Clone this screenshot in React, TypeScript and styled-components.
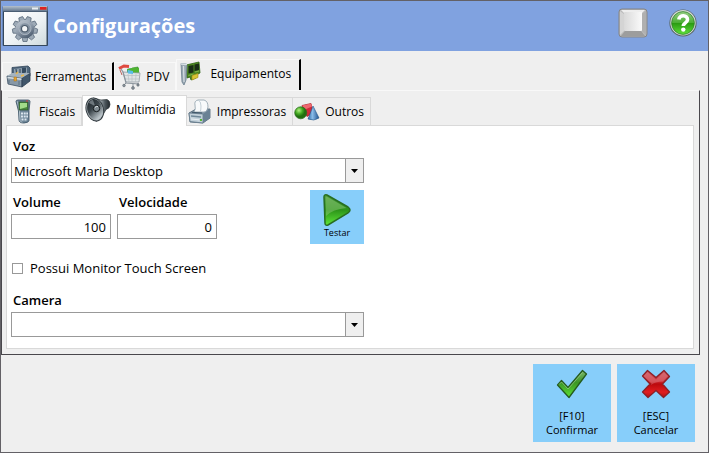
import React from "react";
import styled, { createGlobalStyle } from "styled-components";

const GlobalStyle = createGlobalStyle`
  *, *::before, *::after { box-sizing: border-box; }
  html, body, #root { height: 100%; }
  body {
    margin: 0;
    background: #efefef;
    color: #000;
    font-family: "Open Sans", "Noto Sans", sans-serif;
    font-size: 13px;
  }
  button, input, select { font: inherit; color: inherit; margin: 0; }
`;

const Window = styled.div`
  min-height: 100%;
  display: flex;
  flex-direction: column;
  border: 1px solid #636166;
  background: #efefef;
`;

const Header = styled.header`
  display: flex;
  align-items: center;
  height: 50px;
  padding: 0 11px 0 1px;
  background: #80a2e0;
`;

const Title = styled.h1`
  flex: 1;
  margin: 0 0 0 4px;
  color: #fff;
  font-size: 20px;
  line-height: 24px;
  font-weight: 700;
`;

const HeaderActions = styled.div`
  display: flex;
  align-items: center;
  gap: 21px;
  padding-bottom: 6px;
`;

const IconButton = styled.button`
  display: flex;
  padding: 0;
  border: 0;
  background: none;
`;

const Main = styled.main`
  padding: 8px 8px 0 0;
`;

const OuterTabs = styled.div`
  display: flex;
  align-items: flex-end;
  height: 31px;
  padding-left: 1px;
`;

const OuterTab = styled.button<{ $active?: boolean; $divider?: boolean }>`
  display: flex;
  align-items: center;
  gap: ${(p) => (p.$active ? 8 : 4)}px;
  height: ${(p) => (p.$active ? 31 : 28)}px;
  padding: ${(p) => (p.$active ? "0 8px 3px 3px" : "0 6px 0 3px")};
  border: 0 solid #f8f8f8;
  border-top-width: 1px;
  border-left-width: 1px;
  border-right: ${(p) => (p.$active || p.$divider ? "2px solid #000" : "1px solid #f8f8f8")};
  background: #efefef;
  font-size: 12px;
  white-space: nowrap;
`;

const OuterPage = styled.div`
  padding: 4px 5px 5px 4px;
  border: 1px solid #49474c;
  border-top-color: #f8f8f8;
`;

const InnerTabs = styled.div`
  display: flex;
  align-items: flex-end;
  height: 30px;
  padding-left: 2px;
`;

const InnerTab = styled.button<{ $active?: boolean }>`
  display: flex;
  align-items: center;
  gap: 5px;
  height: ${(p) => (p.$active ? 31 : 28)}px;
  margin-bottom: ${(p) => (p.$active ? -1 : 0)}px;
  padding: ${(p) => (p.$active ? "0 10px 3px 2px" : "0 6px 0 1px")};
  border: 1px solid #d9d9d9;
  border-bottom: 0;
  border-left-width: ${(p) => (p.$active ? 1 : 0)}px;
  background: ${(p) => (p.$active ? "#fff" : "#efefef")};
  font-size: 12px;
  white-space: nowrap;
  z-index: ${(p) => (p.$active ? 1 : 0)};
`;

const Panel = styled.section`
  padding: 11px 4px 11px;
  border: 1px solid #d9d9d9;
  background: #fff;
`;

const Form = styled.form`
  display: flex;
  flex-direction: column;
  max-width: 353px;
`;

const Field = styled.div`
  display: flex;
  flex-direction: column;
  gap: 3px;
`;

const Label = styled.label`
  padding-left: 2px;
  font-weight: 600;
  line-height: 18px;
`;

const Combo = styled.div`
  display: grid;
  grid-template-columns: 1fr 18px;
  height: 25px;
  border: 1px solid #999;
  background: #fff;
`;

const Select = styled.select`
  grid-area: 1 / 1 / 2 / 3;
  appearance: none;
  width: 100%;
  padding: 0 20px 0 2px;
  border: 0;
  border-radius: 0;
  background: transparent;
`;

const ComboArrow = styled.span`
  grid-area: 1 / 2 / 2 / 3;
  display: flex;
  align-items: center;
  justify-content: center;
  border: 1px solid #999;
  border-width: 0 0 0 1px;
  background: #efefef;
  pointer-events: none;
`;

const AudioRow = styled.div`
  display: flex;
  align-items: flex-start;
  gap: 6px;
  margin-top: 7px;
  & > ${Field} { padding-top: 3px; }
  & > :last-child { margin-left: auto; }
`;

const NumberInput = styled.input`
  width: 100px;
  height: 25px;
  padding: 0 4px;
  border: 1px solid #999;
  border-radius: 0;
  background: #fff;
  text-align: right;
`;

const TestButton = styled.button`
  display: flex;
  flex-direction: column;
  align-items: center;
  width: 54px;
  height: 54px;
  padding: 3px 0 0;
  border: 0;
  background: #87cefa;
  font-size: 9px;
  line-height: 12px;
`;

const CheckRow = styled.label`
  display: flex;
  align-items: center;
  align-self: flex-start;
  gap: 7px;
  margin: 15px 0 14px 1px;
  line-height: 18px;
`;

const Checkbox = styled.input`
  appearance: none;
  width: 11px;
  height: 11px;
  border: 1px solid #999;
  background: #fff;
  &:checked { background: #444; box-shadow: inset 0 0 0 2px #fff; }
`;

const Footer = styled.footer`
  display: flex;
  justify-content: flex-end;
  gap: 6px;
  padding: 9px 13px 0 0;
`;

const ActionButton = styled.button`
  display: flex;
  flex-direction: column;
  align-items: center;
  gap: 10px;
  width: 78px;
  height: 78px;
  padding: 5px 0 0;
  border: 0;
  background: #87cefa;
  font-size: 11px;
  line-height: 14px;
`;

const GEAR_TEETH = [0, 40, 80, 120, 160, 200, 240, 280, 320];

const SettingsIcon = () => (
  <svg width="47" height="42" viewBox="0 0 47 42" aria-hidden="true">
    <defs>
      <linearGradient id="winBar" x2="0" y2="1">
        <stop stopColor="#b4c0cc" /><stop offset="1" stopColor="#60748a" />
      </linearGradient>
      <linearGradient id="winBody" x2="1" y2="1">
        <stop stopColor="#fff" /><stop offset=".55" stopColor="#edf2f4" /><stop offset="1" stopColor="#cfdadd" />
      </linearGradient>
      <linearGradient id="gear" gradientUnits="userSpaceOnUse" x1="15" y1="11" x2="29" y2="37">
        <stop stopColor="#d3dae1" /><stop offset=".5" stopColor="#8f9cab" /><stop offset="1" stopColor="#2c3e52" />
      </linearGradient>
    </defs>
    <rect x=".7" y="1" width="45.3" height="40" rx="1" fill="#34475c" />
    <rect x="1" y="1" width="44.5" height="5.500" fill="url(#winBar)" />
    <rect x="2" y="7" width="42.500" height="33" fill="url(#winBody)" />
    <path d="M30 3.500h6" stroke="#e8eef3" strokeWidth="2" />
    <rect x="38" y="2" width="6.500" height="2.700" fill="#df2222" />
    <g stroke="#5d6d7e" strokeWidth=".8" strokeLinejoin="round">
      {GEAR_TEETH.map((a) => (
        <path key={a} d="M20 16l1-4.500h4l1 4.500z" fill="#9daab6" transform={`rotate(${a + 20} 23 24)`} />
      ))}
    </g>
    <circle cx="23" cy="24" r="9.300" fill="url(#gear)" />
    <circle cx="23" cy="23.700" r="6" fill="#8694a3" stroke="#b3bdc6" strokeWidth=".8" />
    <circle cx="22.700" cy="23.700" r="3.200" fill="#f3f5f6" stroke="#4a5a6a" strokeWidth="1.200" />
  </svg>
);

const KeyIcon = () => (
  <svg width="30" height="30" viewBox="0 0 30 30" aria-hidden="true">
    <defs>
      <linearGradient id="keyTop" x2="1" y2="0">
        <stop stopColor="#d9d9d9" /><stop offset="1" stopColor="#fafafa" />
      </linearGradient>
    </defs>
    <rect x="1" y="1" width="28" height="28" rx="3" fill="#b9b9b9" stroke="#858585" />
    <path d="M3 2h24l-3 3H6z" fill="#eee" />
    <path d="M2 3v24l4-4V6z" fill="#d4d4d4" />
    <path d="M28 3v24l-4-4V6z" fill="#b0b0b0" />
    <path d="M3 28h24l-4-5H7z" fill="#9d9d9d" />
    <rect x="6" y="4" width="18" height="19" rx="1" fill="url(#keyTop)" />
  </svg>
);

const HelpIcon = () => (
  <svg width="28" height="28" viewBox="0 0 28 28" aria-hidden="true">
    <defs>
      <linearGradient id="help" x2="0" y2="1">
        <stop stopColor="#97cf85" /><stop offset=".48" stopColor="#4caf35" />
        <stop offset=".52" stopColor="#2b9c12" /><stop offset="1" stopColor="#5fe03a" />
      </linearGradient>
    </defs>
    <circle cx="14" cy="14" r="13.600" fill="#566561" />
    <circle cx="14" cy="13.800" r="12.700" fill="#d3dad7" />
    <circle cx="14" cy="14" r="11.400" fill="url(#help)" stroke="#2b7d25" strokeWidth=".7" />
    <path d="M9.800 10.500c.5-5.200 9-4.800 8.700.2-.1 3.300-4.200 3-4.200 6.300" fill="none" stroke="#fff" strokeWidth="3.600" />
    <circle cx="14.300" cy="20.600" r="2.200" fill="#fff" />
  </svg>
);

const ToolboxIcon = () => (
  <svg width="25" height="24" viewBox="0 0 25 24" aria-hidden="true">
    <path d="M6 2.500L22 1l2 2v8l-8 2-10-2z" fill="#50677c" stroke="#32465a" strokeWidth=".8" />
    <path d="M8 4l13-1.500v7L15 11 8 10z" fill="#8fa1b0" />
    <path d="M10 4l1 6M14 4v6" stroke="#3e5062" strokeWidth="1.200" />
    <path d="M16 3l4-.500v5l-4 1z" fill="#354b60" />
    <path d="M1 11l15 2v9L2 19z" fill="#8798a7" stroke="#3a4d5f" strokeWidth=".8" />
    <path d="M16 13l8-5v8l-8 6z" fill="#40566b" stroke="#2b3e50" strokeWidth=".8" />
    <path d="M1 11l5-3 18 0-8 5z" fill="#a4b3bf" />
    <path d="M1.500 12.500l14 1.800" stroke="#d4dde3" strokeWidth="1.500" />
    <path d="M3 15v3M13 16v4" stroke="#5d7082" />
    <rect x="8" y="12" width="2.500" height="4" fill="#e5a633" stroke="#a66b14" strokeWidth=".5" />
    <path d="M10 9l2-2M15 11l3-1" stroke="#e8b64c" strokeWidth="1.600" />
  </svg>
);

const CartIcon = () => (
  <svg width="24" height="26" viewBox="0 0 24 26" aria-hidden="true">
    <path d="M9 5l5-1 1 6H9z" fill="#39a7e0" />
    <path d="M14 4l6-1 1 7h-7z" fill="#4fb431" stroke="#2e8c22" strokeWidth=".6" />
    <path d="M10 6.500l7 1v3h-7z" fill="#58bce8" />
    <path d="M5 8l17 1-1 9H8z" fill="#e0e4e6" stroke="#929ba2" strokeWidth=".8" />
    <path d="M9 5l5-1 7 0v4l-11 1z" fill="#4fb431" />
    <path d="M10 6l5 1v3l-5-.5z" fill="#58bce8" />
    <path d="M6 11.500h15M7 15h14M10 10l1 8M14 10v8M18 10l-.5 8" stroke="#b8bec3" strokeWidth=".7" />
    <path d="M3 5l2 3 3 11 13 1" fill="none" stroke="#8b949c" strokeWidth="1.200" />
    <path d="M1 4.500L6 2l5 .500" fill="none" stroke="#df4a40" strokeWidth="3" />
    <path d="M2 6l2 5" stroke="#b9625c" strokeWidth="1" />
    <path d="M8 19l-2 2M20 19v2M15 20v3" stroke="#8b949c" />
    <g fill="#8a939b" stroke="#5b656d" strokeWidth=".6">
      <circle cx="6" cy="21.500" r="1.300" /><circle cx="15" cy="24" r="1.400" /><circle cx="20" cy="21" r="1.200" />
    </g>
  </svg>
);

const BoardIcon = () => (
  <svg width="22" height="26" viewBox="0 0 22 26" aria-hidden="true">
    <path d="M6 4l13-3 1 11-4 2v3l-5 2-1-3-3 1z" fill="#4c8620" stroke="#2c6212" strokeWidth=".8" />
    <path d="M8.500 5l5-1v7.500l-5 1zM14.500 3.500l4.500-1v6.500l-4.500 1z" fill="#182c16" />
    <path d="M8.500 14.500l5-1.500M15 11l4-1" stroke="#8fc05a" strokeWidth=".8" />
    <path d="M12 14.500l6-2v4l-6 2.500z" fill="#d8c435" stroke="#a18d19" strokeWidth=".6" />
    <path d="M1 2.500L6.500 3l.5 2-1 14-2 5-2-3z" fill="#9aa8b3" stroke="#6b7f8e" strokeWidth=".8" />
    <path d="M1 3l6 .5" stroke="#d9e1e6" strokeWidth="1.500" />
    <path d="M3.500 5l.5 16" stroke="#d5dde2" strokeWidth="1.200" />
  </svg>
);

const TerminalIcon = () => (
  <svg width="25" height="25" viewBox="0 0 25 25" aria-hidden="true">
    <path d="M7 2.500Q7 1 9 1h10q2 0 2 1.500l-1 9v10q0 2-5 2.500-5 0-5-3l-.500-9z" fill="#6f8799" stroke="#354d60" strokeWidth=".8" />
    <path d="M8.500 2.500l2 10 .5 9 2 2" stroke="#b7c5ce" fill="none" />
    <rect x="10" y="3" width="9" height="8" fill="#4a8a3c" stroke="#2b5030" strokeWidth=".8" />
    <path d="M11 4h7v4l-7 2z" fill="#a3dc8a" />
    <path d="M17 2h2" stroke="#d83a35" />
    <g fill="#dce6ee">
      <rect x="12" y="13.500" width="2" height="2" /><rect x="14.700" y="13.500" width="2" height="2" /><rect x="17.300" y="13.500" width="1.700" height="2" />
      <rect x="12" y="16.500" width="2" height="2" /><rect x="14.700" y="16.500" width="2" height="2" /><rect x="17.300" y="16.500" width="1.700" height="2" />
      <rect x="12.500" y="19.500" width="2" height="2" /><rect x="15.500" y="19.500" width="2" height="2" />
    </g>
  </svg>
);

const SpeakerIcon = () => (
  <svg width="26" height="25" viewBox="0 0 26 25" aria-hidden="true">
    <defs>
      <linearGradient id="coneIn" x1="0" y1="0" x2=".4" y2="1">
        <stop stopColor="#1b2126" /><stop offset=".5" stopColor="#3b454b" /><stop offset="1" stopColor="#bac3c8" />
      </linearGradient>
      <linearGradient id="horn" x2="1" y2="0">
        <stop stopColor="#2b3338" /><stop offset=".4" stopColor="#aab3b8" /><stop offset=".7" stopColor="#4e585e" /><stop offset="1" stopColor="#20272b" />
      </linearGradient>
    </defs>
    <path d="M8 1l8 2 6-.5q3 1 3 5 0 4-4 5l-4 7-6 5z" fill="url(#horn)" stroke="#2b3236" strokeWidth=".7" />
    <ellipse cx="9.800" cy="12.500" rx="8.600" ry="11.600" transform="rotate(-16 9.800 12.500)" fill="#a9b1b6" stroke="#343d42" />
    <ellipse cx="10" cy="12.500" rx="7.600" ry="10.600" transform="rotate(-16 10 12.500)" fill="url(#coneIn)" />
    <path d="M4 6q1-3 4-3l2 6z" fill="#9aa4aa" opacity=".6" />
    <circle cx="11.500" cy="11.500" r="3.200" fill="#7f8a90" stroke="#14191c" />
    <path d="M10 10.500q1-1.500 3-1" stroke="#dde3e6" fill="none" />
  </svg>
);

const PrinterIcon = () => (
  <svg width="24" height="25" viewBox="0 0 24 25" aria-hidden="true">
    <path d="M1 14l7-4 14 0v9l-7 5L2 23z" fill="#8498a8" stroke="#4c6274" strokeWidth=".8" />
    <path d="M1 14l14 1v9L2 22.500z" fill="#c3d1da" stroke="#62798a" strokeWidth=".8" />
    <path d="M15 15l7-5v9l-7 5z" fill="#6a8294" />
    <path d="M6 13q2-3 1-7-1-4 3-5h6q4 1 4 7l-1 3q-1 2-3 2z" fill="#f8fafb" stroke="#8d9ea9" strokeWidth=".8" />
    <path d="M10 1q3 1 3 6t-1 6" fill="none" stroke="#c5d0d7" />
    <path d="M4 13.300l10 .7" stroke="#3f5668" />
    <path d="M3 17l10 1" stroke="#71899a" strokeWidth="1.500" />
    <path d="M3 20l8 .8" stroke="#e8eff3" />
    <rect x="12" y="20" width="2" height="2" fill="#58b735" />
  </svg>
);

const ShapesIcon = () => (
  <svg width="26" height="18" viewBox="0 0 26 18" aria-hidden="true">
    <defs>
      <radialGradient id="ball" cx=".35" cy=".3"><stop stopColor="#b2ef83" /><stop offset=".6" stopColor="#42a921" /><stop offset="1" stopColor="#226f11" /></radialGradient>
      <linearGradient id="cone"><stop stopColor="#2c69a5" /><stop offset=".4" stopColor="#8abce8" /><stop offset="1" stopColor="#205391" /></linearGradient>
    </defs>
    <path d="M8 2.500l9-2 2 9-6 4-3-3z" fill="#cf2b3a" stroke="#9c1623" strokeWidth=".7" />
    <path d="M8 2.500l9-2 1 3-7 3z" fill="#ef6870" />
    <path d="M19 3l6 12q-5 3.500-11 1z" fill="url(#cone)" stroke="#225487" strokeWidth=".6" />
    <circle cx="6.700" cy="9.800" r="6" fill="url(#ball)" stroke="#286b1d" strokeWidth=".7" />
  </svg>
);

const PlayIcon = () => (
  <svg width="30" height="34" viewBox="0 0 30 34" aria-hidden="true">
    <defs>
      <linearGradient id="play" x2="0" y2="1"><stop stopColor="#4d9c3e" /><stop offset=".5" stopColor="#2c9419" /><stop offset="1" stopColor="#5fe638" /></linearGradient>
    </defs>
    <path d="M2 4Q2 1 5 2l21 12q4 3 0 6L6 32q-3 1-3-2z" fill="url(#play)" stroke="#286e22" strokeWidth="1.500" />
    <path d="M3.500 4q1-1 2 0l19 11Q11 16 4 23z" fill="#96ca83" opacity=".45" />
  </svg>
);

const CheckIcon = () => (
  <svg width="32" height="30" viewBox="0 0 32 30" aria-hidden="true">
    <defs>
      <linearGradient id="check" x2="0" y2="1"><stop stopColor="#7cb66d" /><stop offset=".45" stopColor="#3b9625" /><stop offset="1" stopColor="#5de333" /></linearGradient>
    </defs>
    <path d="M1.500 16l4-4.500 6.500 7L26.500 1.500l4 3.500L13 28.500z" fill="url(#check)" stroke="#245b1e" strokeWidth="1.300" strokeLinejoin="round" />
    <path d="M3 15.500l2.500-2.500 6.500 7L26.500 3.500" fill="none" stroke="#a8d396" opacity=".6" />
  </svg>
);

const CancelIcon = () => (
  <svg width="30" height="30" viewBox="0 0 30 30" aria-hidden="true">
    <defs>
      <linearGradient id="cancel" x2="0" y2="1"><stop stopColor="#c9505a" /><stop offset=".4" stopColor="#cd2b34" /><stop offset=".5" stopColor="#bb090d" /><stop offset=".8" stopColor="#e01d20" /><stop offset="1" stopColor="#b01014" /></linearGradient>
    </defs>
    <path d="M6.500 1.500l8.500 7 8-7 5.500 6-7 7.500 7 8-6 5.500-7.500-7-8 7-5.500-5.500 7.500-8-7.500-8z" fill="url(#cancel)" stroke="#8b2027" strokeWidth="1.300" strokeLinejoin="round" />
    <path d="M6.500 3l8.500 7.500L23 3l4 4-5 5.500Q14 12.500 10 16l.5-1.500-8-7.500z" fill="#e5a1a7" opacity=".35" />
  </svg>
);

const Arrow = () => (
  <ComboArrow aria-hidden="true">
    <svg width="7" height="4" viewBox="0 0 7 4"><path d="M0 0h7L3.500 4z" /></svg>
  </ComboArrow>
);

export default function App() {
  return (
    <>
      <GlobalStyle />
      <Window>
        <Header>
          <SettingsIcon />
          <Title>Configurações</Title>
          <HeaderActions>
            <IconButton type="button" aria-label="Teclado"><KeyIcon /></IconButton>
            <IconButton type="button" aria-label="Ajuda"><HelpIcon /></IconButton>
          </HeaderActions>
        </Header>
        <Main>
          <OuterTabs role="tablist">
            <OuterTab type="button" role="tab" aria-selected="false" $divider><ToolboxIcon />Ferramentas</OuterTab>
            <OuterTab type="button" role="tab" aria-selected="false"><CartIcon />PDV</OuterTab>
            <OuterTab type="button" role="tab" aria-selected="true" $active><BoardIcon />Equipamentos</OuterTab>
          </OuterTabs>
          <OuterPage>
            <InnerTabs role="tablist">
              <InnerTab type="button" role="tab" aria-selected="false"><TerminalIcon />Fiscais</InnerTab>
              <InnerTab type="button" role="tab" aria-selected="true" $active><SpeakerIcon />Multimídia</InnerTab>
              <InnerTab type="button" role="tab" aria-selected="false"><PrinterIcon />Impressoras</InnerTab>
              <InnerTab type="button" role="tab" aria-selected="false"><ShapesIcon />Outros</InnerTab>
            </InnerTabs>
            <Panel role="tabpanel">
              <Form onSubmit={(e) => e.preventDefault()}>
                <Field>
                  <Label htmlFor="voice">Voz</Label>
                  <Combo>
                    <Select id="voice"><option>Microsoft Maria Desktop</option></Select>
                    <Arrow />
                  </Combo>
                </Field>
                <AudioRow>
                  <Field>
                    <Label htmlFor="volume">Volume</Label>
                    <NumberInput id="volume" inputMode="numeric" defaultValue="100" />
                  </Field>
                  <Field>
                    <Label htmlFor="rate">Velocidade</Label>
                    <NumberInput id="rate" inputMode="numeric" defaultValue="0" />
                  </Field>
                  <TestButton type="button"><PlayIcon />Testar</TestButton>
                </AudioRow>
                <CheckRow>
                  <Checkbox type="checkbox" />
                  Possui Monitor Touch Screen
                </CheckRow>
                <Field>
                  <Label htmlFor="camera">Camera</Label>
                  <Combo>
                    <Select id="camera"><option></option></Select>
                    <Arrow />
                  </Combo>
                </Field>
              </Form>
            </Panel>
          </OuterPage>
        </Main>
        <Footer>
          <ActionButton type="button"><CheckIcon /><span>[F10]<br />Confirmar</span></ActionButton>
          <ActionButton type="button"><CancelIcon /><span>[ESC]<br />Cancelar</span></ActionButton>
        </Footer>
      </Window>
    </>
  );
}
